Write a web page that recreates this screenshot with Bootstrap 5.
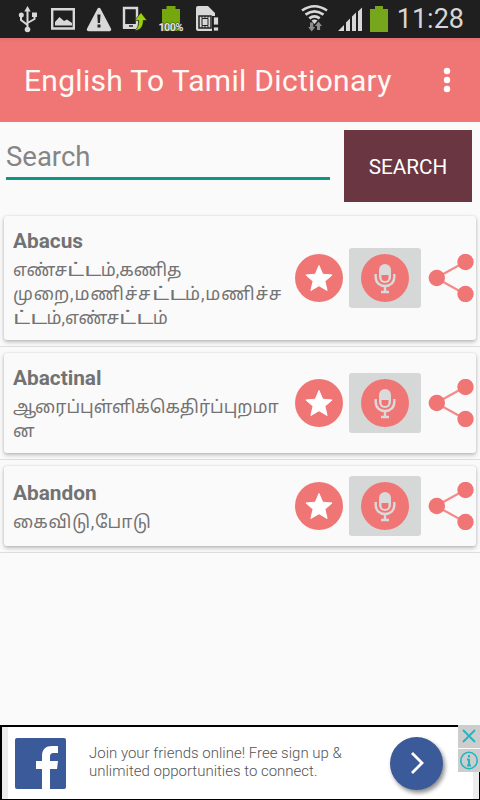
<!DOCTYPE html>
<html lang="en">
<head>
<meta charset="utf-8">
<meta name="viewport" content="width=device-width, initial-scale=1">
<title>English To Tamil Dictionary</title>
<link href="https://cdn.jsdelivr.net/npm/bootstrap@5.3.0/dist/css/bootstrap.min.css" rel="stylesheet">
<style>
:root{--coral:#f07675}
body{font-family:Roboto,"Noto Sans Tamil","Noto Sans",sans-serif;background:#fafafa;color:#737373;height:800px;overflow:hidden}
svg{display:block;flex:none}
.statusbar{height:38px;background:#1f1f1f;padding-right:16px}
.clock{font-size:27px;line-height:38px;color:#d6d6d6;letter-spacing:0}
.appbar{height:84px;background:linear-gradient(#e37071,var(--coral) 5px);padding:0 28px 0 24px}
.app-title{font-size:30px;line-height:84px;letter-spacing:.3px;color:#fffaf5;padding-top:1px}
.searchrow{height:88px;padding:8px 8px 0 6px}
.search-field{width:324px;height:50px;border:0;border-bottom:3px solid #0f9683;border-radius:0;background:transparent;padding:6px 0 0;font-size:27.5px;line-height:38px}
.search-field:focus{background:transparent;border-color:#0f9683}
.search-field::placeholder{color:#858585;opacity:1}
.search-btn{width:128px;height:72px;border-radius:0;background:#6a3642;color:#fff;font-size:20.7px;padding-top:3px!important}
.entry{border-bottom:1px solid #dedede;padding:6px 4px}
.word-card{background:#fafafa;border-radius:3px;padding:10px 0 10px 9px;box-shadow:0 2px 4px rgba(0,0,0,.26),0 0 2px rgba(0,0,0,.12)}
.body-text{width:276px}
.word{font-size:20.8px;font-weight:700;line-height:30px;height:32px;color:#727272}
.meaning{font-size:17.5px;line-height:24px;white-space:nowrap}
.wide{display:inline-block;letter-spacing:0;transform:scaleX(1.42);transform-origin:0 50%;margin-right:9.300px}
.loose{letter-spacing:.9px}
.airy{letter-spacing:.8px}
.actions{gap:6px;width:181px;flex:none}
.mic{width:72px;height:60px;border-radius:3px;background:#d6d7d7;flex:none;margin-right:1px}
.ad{height:75px;background:#fff;border:solid #000;border-width:2px 1px 1px 2px;padding-left:13px;box-shadow:inset 6px 0 #ececec,inset -6px 0 #ececec}
.ad-text{font-size:15px;line-height:18px;font-weight:300;color:#555;margin-left:23px;width:301px;padding-bottom:2px}
.go{width:53px;height:53px;border-radius:50%;background:#3b5a9a;box-shadow:2px 3px 4px rgba(0,0,0,.45)}
.ad-marks{right:-1px;top:-2px;gap:1px;background:#fff}
.ad-marks svg{background:#cdcdcd}
</style>
</head>
<body class="d-flex flex-column">
<svg width="0" height="0" class="position-absolute">
<symbol id="star" viewBox="0 0 48 48"><circle cx="24" cy="24" r="24" fill="#f07675"/><path d="M24 11.500l3.700 8.700 9.400.8-7.200 6.200 2.200 9.300L24 31.700l-8.100 4.800 2.200-9.300-7.200-6.200 9.400-.8z" fill="#fff" stroke="#fff" stroke-linejoin="round"/></symbol>
<symbol id="mic" viewBox="0 0 48 48"><circle cx="24" cy="24" r="24" fill="#f07675"/><rect x="18" y="10" width="12" height="19" rx="6" fill="#dadada"/><path d="M20.500 21h7v2.500a3.500 3.500 0 0 1-7 0z" fill="#f07675"/><path d="M14.700 20v3c0 5.500 4 9 9.300 9s9.300-3.500 9.300-9V20M24 32v6M20 38h8" fill="none" stroke="#dadada" stroke-width="2.400"/></symbol>
<symbol id="share" viewBox="0 0 48 48"><path d="M37 8L8 24l29 16" fill="none" stroke="#f38b8a" stroke-width="2.200"/><circle cx="37.500" cy="8" r="8.200" fill="#f07675"/><circle cx="8.800" cy="24" r="8.200" fill="#f07675"/><circle cx="37.500" cy="40" r="8.200" fill="#f07675"/></symbol>
</svg>
<div class="statusbar d-flex justify-content-between">
<svg width="230" height="38" viewBox="0 0 230 38" fill="#d8d8d8">
<path d="M27.500 9v20M21 15v5l6.500 5M34.500 15v4l-7 4" fill="none" stroke="#d8d8d8" stroke-width="2"/><path d="M27.500 6l3.200 5.500h-6.400z"/><circle cx="27.500" cy="29.500" r="2.800"/><circle cx="21.300" cy="15" r="2.500"/><path d="M32 12.500h5v4.500h-5z"/>
<path d="M52.200 9.200h21.600v19.300H52.200z" fill="none" stroke="#d8d8d8" stroke-width="2.400"/><path d="M55 25.500V22l4.500-5 4.500 4 3-1.500 5 3.500v2.500z"/>
<path d="M99 9.500L109.500 29.500H88.500z" stroke="#d8d8d8" stroke-width="3.500" stroke-linejoin="round"/><path d="M97.300 14.500h3.200l-.5 8.500h-2.200zM97.500 24.500h3v3h-3z" fill="#222"/>
<path d="M124 8h13v19h-13z" fill="none" stroke="#d8d8d8" stroke-width="2.400"/><path d="M123 24h15v5h-15z"/><path d="M129 26h4" stroke="#222" stroke-width="1.500"/><path d="M134 30.500c4-1.500 4.700-6 4.700-10h-4.200l6.500-8 6 8h-3.700c0 6-3 10.500-9.300 10z" fill="#9bd00d" stroke="#222" stroke-width=".7"/>
<path d="M162 9h4.500V6h9v3h4.500v22h-18z" fill="#75a80c"/><text x="171" y="31" text-anchor="middle" font-family="Roboto" font-size="11" font-weight="700" fill="#e4e4e4" stroke="#333" stroke-width="1" paint-order="stroke" textLength="25">100%</text>
<path d="M198 6h10l7 7v3h-3v15h-14a2 2 0 0 1-2-2V8a2 2 0 0 1 2-2z"/><path d="M199 16h12v12h-12z" fill="none" stroke="#222" stroke-width="1.500"/><path d="M202 18.500h6v7h-6z" fill="none" stroke="#222" stroke-width="1"/><path d="M202 16v2m3-2v2m3-2v2m-6 8v2m3-2v2m3-2v2" stroke="#222"/><path d="M213.500 17h5v8h-5zM213.500 27h5v4h-5z" stroke="#222" stroke-width=".8"/>
</svg>
<div class="d-flex">
<svg width="98" height="38" viewBox="300 0 98 38" fill="#d8d8d8">
<g fill="none" stroke="#d8d8d8" stroke-width="2.700"><path d="M303 10.500q12.500-8.500 25 0M306.500 14.700q9-6.500 18 0M310.300 18.400q5.200-4 10.400 0"/></g><path d="M312.500 20.500q3-2 6 0l-3 3.500z"/>
<path d="M311 22.500v4.500h-1.800l3.500 4.500 3.500-4.500h-1.900v-4.500zM318 30v-4h-2l3.500-4.500L323 26h-1.900v4z" fill="#8d8d8d"/>
<path d="M339 31l6-6v6zM347 22.500l4-4V31h-4zM353 16.500l4-4V31h-4zM359 11.500l4-4V31h-4z"/>
<path d="M371 9h5V6h8v3h5v23h-18z" fill="#75a61b"/>
</svg>
<span class="clock">11:28</span></div>
</div>
<header class="appbar d-flex justify-content-between align-items-center">
<span class="app-title text-nowrap">English To Tamil Dictionary</span>
<svg width="10" height="28" viewBox="0 0 10 28" fill="#fff"><circle cx="5" cy="5" r="3.200"/><circle cx="5" cy="14" r="3.200"/><circle cx="5" cy="23" r="3.200"/></svg>
</header>
<div class="searchrow d-flex justify-content-between align-items-start">
<input class="search-field form-control shadow-none" placeholder="Search" aria-label="Search">
<button class="search-btn btn p-0">SEARCH</button>
</div>
<main class="flex-grow-1">
<div class="entry"><div class="word-card d-flex justify-content-between align-items-center">
<div class="body-text"><div class="word">Abacus</div><div class="meaning" lang="ta">எண்ச<span class="wide">ட்ட</span>ம்,கணித<br><span class="loose">முறை,மணிச்ச<span class="wide">ட்ட</span>ம்,மணிச்ச</span><br><span class="wide">ட்ட</span>ம்,எண்ச<span class="wide">ட்ட</span>ம்</div></div>
<div class="actions d-flex align-items-center"><svg width="48" height="48"><use href="#star"/></svg><div class="mic d-flex align-items-center justify-content-center"><svg width="48" height="48"><use href="#mic"/></svg></div><svg width="48" height="48"><use href="#share"/></svg></div>
</div></div>
<div class="entry"><div class="word-card d-flex justify-content-between align-items-center">
<div class="body-text"><div class="word">Abactinal</div><div class="meaning" lang="ta">ஆரைப்புள்ளிக்கெதிர்ப்புறமா<br>ன</div></div>
<div class="actions d-flex align-items-center"><svg width="48" height="48"><use href="#star"/></svg><div class="mic d-flex align-items-center justify-content-center"><svg width="48" height="48"><use href="#mic"/></svg></div><svg width="48" height="48"><use href="#share"/></svg></div>
</div></div>
<div class="entry"><div class="word-card d-flex justify-content-between align-items-center">
<div class="body-text"><div class="word">Abandon</div><div class="meaning airy" lang="ta">கைவிடு,போடு</div></div>
<div class="actions d-flex align-items-center"><svg width="48" height="48"><use href="#star"/></svg><div class="mic d-flex align-items-center justify-content-center"><svg width="48" height="48"><use href="#mic"/></svg></div><svg width="48" height="48"><use href="#share"/></svg></div>
</div></div>
</main>
<footer class="ad position-relative d-flex align-items-center">
<svg width="51" height="51" viewBox="0 0 51 51"><rect width="51" height="51" rx="2" fill="#3b5a9a"/><path d="M27 51V31h-6v-8h6v-5c0-7 4-10 10-10h6v7h-4c-3 0-4 1-4 4v4h8l-1 8h-7v20z" fill="#fff"/></svg>
<div class="ad-text text-nowrap">Join your friends online! Free sign up &amp;<br>unlimited opportunities to connect.</div>
<div class="go d-flex align-items-center justify-content-center"><svg width="16" height="24" viewBox="0 0 16 24"><path d="M3 2l10 10L3 22" fill="none" stroke="#fff" stroke-width="2.800"/></svg></div>
<div class="ad-marks position-absolute d-flex flex-column">
<svg width="22" height="23" viewBox="0 0 22 23"><path d="M5 5l12 12M17 5L5 17" stroke="#20b5c2" stroke-width="1.800"/></svg>
<svg width="22" height="23" viewBox="0 0 22 23"><circle cx="11" cy="11.500" r="8.200" fill="none" stroke="#20b5c2" stroke-width="1.600"/><path d="M11 6v2.500M11 10v7M9 10.500h2M9 16.500h4" stroke="#20b5c2" stroke-width="2"/></svg>
</div>
</footer>
<script src="https://cdn.jsdelivr.net/npm/bootstrap@5.3.0/dist/js/bootstrap.bundle.min.js"></script>
</body>
</html>
